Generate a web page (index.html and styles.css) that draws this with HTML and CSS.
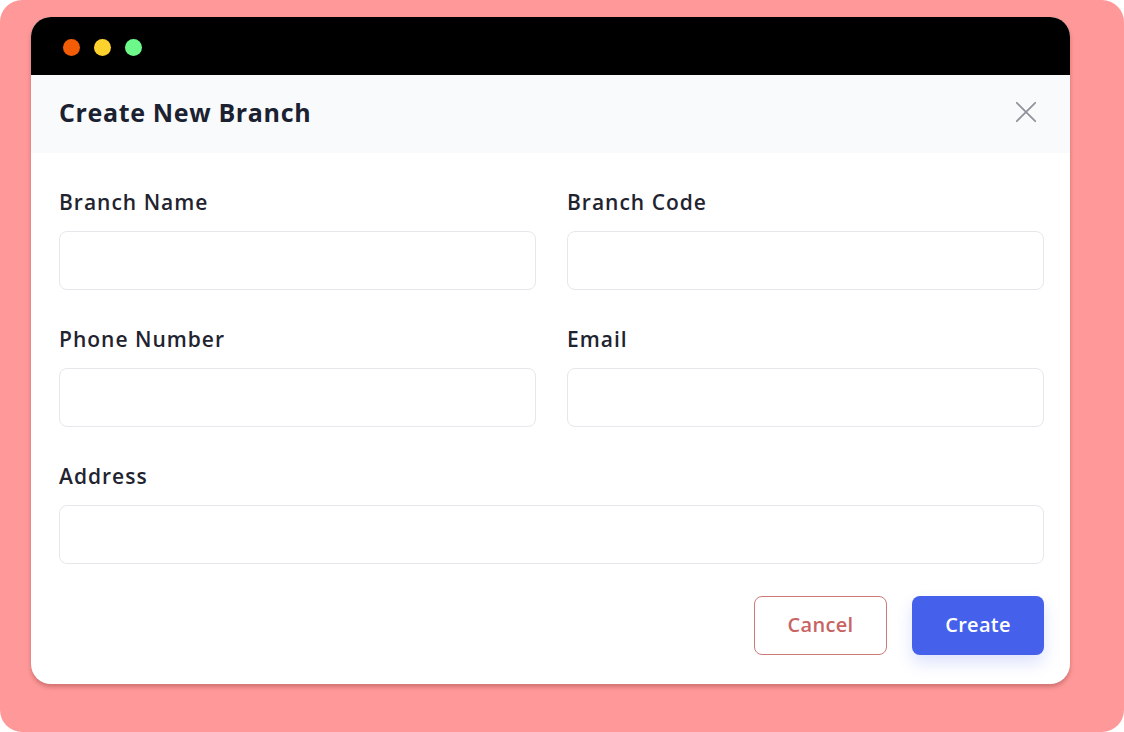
FILE: index.html
```html
<!DOCTYPE html>
<html>
<head lang="en">
    <meta charset="UTF-8">
    <title>Create New Branch</title>
    <link rel="stylesheet" href="styles.css">
</head>
<body>
<div class="stage">
    <div class="window">
        <div class="titlebar">
            <span class="dot dot-red"></span>
            <span class="dot dot-yellow"></span>
            <span class="dot dot-green"></span>
        </div>
        <div class="modal-head">
            <h1>Create New Branch</h1>
            <svg class="close" width="24" height="24" viewBox="0 0 24 24">
                <path d="M2 2 L22 22 M22 2 L2 22" stroke="#8f949c" stroke-width="2" stroke-linecap="round"/>
            </svg>
        </div>
        <form class="modal-body">
            <div class="grid">
                <div class="field">
                    <label>Branch Name</label>
                    <input type="text">
                </div>
                <div class="field">
                    <label>Branch Code</label>
                    <input type="text">
                </div>
                <div class="field">
                    <label>Phone Number</label>
                    <input type="text">
                </div>
                <div class="field">
                    <label>Email</label>
                    <input type="text">
                </div>
                <div class="field wide">
                    <label>Address</label>
                    <input type="text">
                </div>
            </div>
            <div class="actions">
                <button type="button" class="btn btn-cancel">Cancel</button>
                <button type="button" class="btn btn-create">Create</button>
            </div>
        </form>
    </div>
</div>
</body>
</html>
```

FILE: styles.css
```css
*{
    margin: 0;
    padding: 0;
    box-sizing: border-box;
}
body{
    background: #fff;
    font-family: "Open Sans", "Noto Sans", sans-serif;
    color: #1f2430;
}
.stage{
    width: 1124px;
    height: 732px;
    background: #ff9999;
    border-radius: 22px;
    padding: 17px 54px 48px 31px;
}
.window{
    width: 1039px;
    height: 667px;
    background: #fff;
    border-radius: 20px;
    overflow: hidden;
    box-shadow: 0 3px 4px rgba(120, 40, 40, 0.35);
    display: flex;
    flex-direction: column;
}
.titlebar{
    flex-shrink: 0;
    height: 58px;
    background: #000;
    display: flex;
    align-items: center;
    padding: 2px 0 0 32px;
    gap: 14px;
}
.dot{
    width: 17px;
    height: 17px;
    border-radius: 50%;
}
.dot-red{ background: #f25c05; }
.dot-yellow{ background: #fdd22c; }
.dot-green{ background: #6cf98a; }
.modal-head{
    flex-shrink: 0;
    height: 78px;
    background: #f9fafb;
    display: flex;
    align-items: center;
    justify-content: space-between;
    padding: 0 33px 5px 28px;
}
.modal-head h1{
    font-size: 25px;
    font-weight: 700;
    letter-spacing: 0.65px;
    color: #1b2130;
}
.close{
    width: 22px;
    height: 22px;
}
.modal-body{
    padding: 35px 26px 29px 28px;
}
.grid{
    display: grid;
    grid-template-columns: 1fr 1fr;
    column-gap: 31px;
    row-gap: 35px;
}
.field{
    display: flex;
    flex-direction: column;
    gap: 15px;
}
.field.wide{
    grid-column: 1 / 3;
}
.field label{
    font-size: 21px;
    font-weight: 600;
    letter-spacing: 1px;
    line-height: 28px;
    color: #1f2430;
}
.field input{
    height: 59px;
    border: 1.5px solid #e5e7eb;
    border-radius: 8px;
    background: #fff;
    font: inherit;
    padding: 0 14px;
}
.actions{
    display: flex;
    justify-content: flex-end;
    gap: 25px;
    margin-top: 32px;
}
.btn{
    height: 59px;
    border-radius: 8px;
    font-family: inherit;
    font-size: 20px;
    font-weight: 600;
    letter-spacing: 0.3px;
    padding-bottom: 3px;
    cursor: pointer;
}
.btn-cancel{
    width: 133px;
    background: #fff;
    border: 1.5px solid #cf7878;
    color: #c96464;
}
.btn-create{
    width: 132px;
    background: #4561ec;
    border: none;
    color: #fff;
    box-shadow: 0 8px 16px rgba(69, 97, 236, 0.18);
}
```
